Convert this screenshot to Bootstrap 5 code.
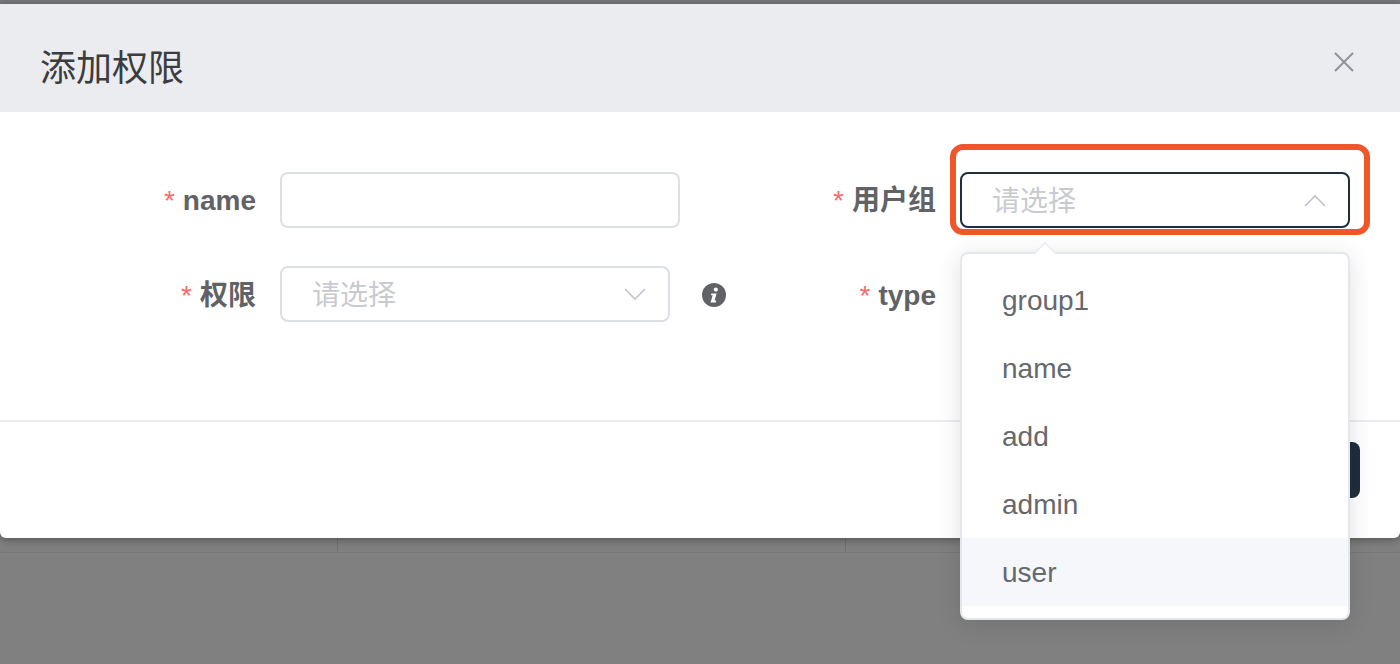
<!DOCTYPE html>
<html lang="zh-CN">
<head>
<meta charset="utf-8">
<title>添加权限</title>
<link href="https://cdn.jsdelivr.net/npm/bootstrap@5.3.0/dist/css/bootstrap.min.css" rel="stylesheet">
<style>
html,body{height:100%;}
body{background:#808080;overflow:hidden;font-family:"Liberation Sans","Noto Sans CJK SC",sans-serif;color:#606266;}
.strip{display:flex;}
.strip-top{height:4px;background:#77777b;}
.strip-bottom{height:15px;border-bottom:1px solid #77777d;}
.strip-cell{border-right:1px solid #727277;}
.cell-a{width:338px;}
.cell-b{width:508px;}
.dialog{height:534px;background:#fff;border-radius:0 0 6px 6px;box-shadow:0 2px 8px rgba(0,0,0,.35);display:flex;flex-direction:column;position:relative;}
.dlg-head{height:108px;background:#ebecf0;padding:0 46px 0 40px;}
.dlg-title{font-size:36px;font-weight:400;color:#3a3c40;margin:0;line-height:1;padding-top:21px;}
.dlg-close{width:20px;height:20px;padding:0;border:0;background:none;display:block;margin-top:8px;line-height:0;}
.dlg-body{height:308px;padding-top:60px;}
.form-line{display:flex;height:56px;margin-bottom:38px;}
.col-left{width:700px;display:flex;align-items:center;flex:none;}
.col-right{display:flex;align-items:center;flex:none;}
.flabel{font-size:28px;font-weight:700;color:#606266;text-align:right;margin:0 24px 0 0;flex:none;line-height:56px;padding-top:2px;height:56px;}
.form-line:first-child .flabel{padding-top:1px;}
.w-left{width:256px;}
.w-right{width:236px;}
.req{color:#f56c6c;margin-right:8px;font-weight:400;}
.txt-input{width:400px;height:56px;border:2px solid #dcdfe6;border-radius:8px;box-shadow:none;flex:none;}
.sel-box{width:390px;height:56px;border:2px solid #dcdfe6;border-radius:8px;background:#fff;padding:0 22px 0 30px;display:flex;align-items:center;justify-content:space-between;font-size:28px;color:#c8cad0;flex:none;}
.sel-box span{padding-top:3px;}
.sel-open{border-color:#1f2d3d;}
.info-dot{margin:2px 0 0 32px;display:block;flex:none;}
.anchor{position:relative;flex:none;}
.mark-box{position:absolute;left:-10px;top:-28px;width:420px;height:91px;border:6px solid #f0562a;border-radius:13px;pointer-events:none;}
.drop{position:absolute;left:0;top:80px;width:390px;height:368px;background:#fff;border:2px solid #e4e7ed;border-radius:8px;padding:12px 0;box-shadow:0 4px 24px rgba(0,0,0,.12);z-index:3;}
.drop-arrow{position:absolute;left:72px;top:-12px;display:block;}
.drop-item{height:68px;line-height:70px;padding-left:40px;font-size:28px;color:#66686c;}
.drop-item.hot{background:#f5f7fa;}
.dlg-foot{border-top:2px solid #ebecf0;flex:1;padding:20px 40px 0 0;display:flex;justify-content:flex-end;}
.ok-btn{width:120px;height:56px;background:#1f2d3d;border:0;border-radius:8px;}
</style>
</head>
<body>
<div class="strip strip-top"><div class="strip-cell cell-a"></div><div class="strip-cell cell-b"></div></div>
<div class="dialog">
  <div class="dlg-head d-flex align-items-center justify-content-between">
    <h5 class="dlg-title">添加权限</h5>
    <button class="dlg-close" type="button" aria-label="关闭">
      <svg width="20" height="20" viewBox="0 0 20 20"><path d="M1 1L19 19M19 1L1 19" stroke="#909399" stroke-width="2" fill="none"/></svg>
    </button>
  </div>
  <div class="dlg-body">
    <div class="form-line">
      <div class="col-left">
        <label class="flabel w-left"><span class="req">*</span>name</label>
        <input class="form-control txt-input" type="text">
      </div>
      <div class="col-right">
        <label class="flabel w-right"><span class="req">*</span>用户组</label>
        <div class="anchor">
          <div class="sel-box sel-open">
            <span>请选择</span>
            <svg width="22" height="13" viewBox="0 0 22 13"><path d="M1 12L11 2L21 12" stroke="#c0c4cc" stroke-width="1.6" fill="none"/></svg>
          </div>
          <div class="mark-box"></div>
          <div class="drop">
            <svg class="drop-arrow" width="22" height="12" viewBox="0 0 22 12"><path d="M0 12L11 1L22 12" fill="#fff" stroke="#e9ebf1" stroke-width="1.5"/></svg>
            <div class="drop-item">group1</div>
            <div class="drop-item">name</div>
            <div class="drop-item">add</div>
            <div class="drop-item">admin</div>
            <div class="drop-item hot">user</div>
          </div>
        </div>
      </div>
    </div>
    <div class="form-line">
      <div class="col-left">
        <label class="flabel w-left"><span class="req">*</span>权限</label>
        <div class="sel-box">
          <span>请选择</span>
          <svg width="22" height="13" viewBox="0 0 22 13"><path d="M1 1L11 11L21 1" stroke="#c0c4cc" stroke-width="1.6" fill="none"/></svg>
        </div>
        <svg class="info-dot" width="24" height="24" viewBox="0 0 24 24"><circle cx="12" cy="12" r="12" fill="#606266"/><circle cx="13.8" cy="6.6" r="2.1" fill="#fff"/><path d="M9.4 10.4h5.2l-2 7.2h1.6l-.5 1.8H8.6l2-7.2H9z" fill="#fff"/></svg>
      </div>
      <div class="col-right">
        <label class="flabel w-right"><span class="req">*</span>type</label>
      </div>
    </div>
  </div>
  <div class="dlg-foot">
    <button class="ok-btn" type="button" aria-label="确定"></button>
  </div>
</div>
<div class="strip strip-bottom"><div class="strip-cell cell-a"></div><div class="strip-cell cell-b"></div></div>
</body>
</html>
